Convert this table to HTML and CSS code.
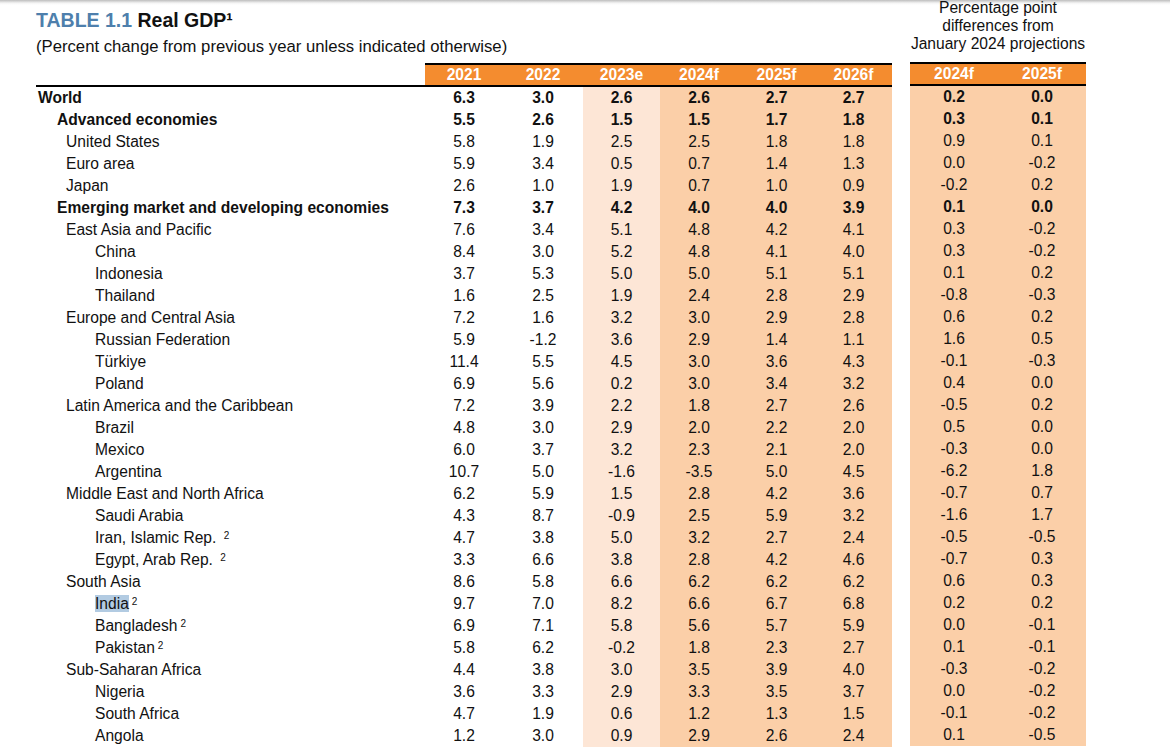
FILE: index.html
```html
<!DOCTYPE html>
<html lang="en">
<head>
<meta charset="utf-8">
<title>Table 1.1 Real GDP</title>
<link rel="stylesheet" href="styles.css">
</head>
<body>
<div class="page">
  <section class="main">
    <div class="title-block">
      <h1 class="title"><span class="num">TABLE 1.1</span> Real GDP¹</h1>
      <p class="subtitle">(Percent change from previous year unless indicated otherwise)</p>
    </div>
    <div class="hrow">
      <div class="lab"></div>
      <div class="y">2021</div><div class="y">2022</div><div class="y">2023e</div><div class="y">2024f</div><div class="y">2025f</div><div class="y">2026f</div>
    </div>
    <div class="row b"><div class="lab l0">World</div><div>6.3</div><div>3.0</div><div class="e">2.6</div><div class="f">2.6</div><div class="f">2.7</div><div class="f">2.7</div></div>
    <div class="row b"><div class="lab l1">Advanced economies</div><div>5.5</div><div>2.6</div><div class="e">1.5</div><div class="f">1.5</div><div class="f">1.7</div><div class="f">1.8</div></div>
    <div class="row"><div class="lab l2">United States</div><div>5.8</div><div>1.9</div><div class="e">2.5</div><div class="f">2.5</div><div class="f">1.8</div><div class="f">1.8</div></div>
    <div class="row"><div class="lab l2">Euro area</div><div>5.9</div><div>3.4</div><div class="e">0.5</div><div class="f">0.7</div><div class="f">1.4</div><div class="f">1.3</div></div>
    <div class="row"><div class="lab l2">Japan</div><div>2.6</div><div>1.0</div><div class="e">1.9</div><div class="f">0.7</div><div class="f">1.0</div><div class="f">0.9</div></div>
    <div class="row b"><div class="lab l1">Emerging market and developing economies</div><div>7.3</div><div>3.7</div><div class="e">4.2</div><div class="f">4.0</div><div class="f">4.0</div><div class="f">3.9</div></div>
    <div class="row"><div class="lab l2">East Asia and Pacific</div><div>7.6</div><div>3.4</div><div class="e">5.1</div><div class="f">4.8</div><div class="f">4.2</div><div class="f">4.1</div></div>
    <div class="row"><div class="lab l3">China</div><div>8.4</div><div>3.0</div><div class="e">5.2</div><div class="f">4.8</div><div class="f">4.1</div><div class="f">4.0</div></div>
    <div class="row"><div class="lab l3">Indonesia</div><div>3.7</div><div>5.3</div><div class="e">5.0</div><div class="f">5.0</div><div class="f">5.1</div><div class="f">5.1</div></div>
    <div class="row"><div class="lab l3">Thailand</div><div>1.6</div><div>2.5</div><div class="e">1.9</div><div class="f">2.4</div><div class="f">2.8</div><div class="f">2.9</div></div>
    <div class="row"><div class="lab l2">Europe and Central Asia</div><div>7.2</div><div>1.6</div><div class="e">3.2</div><div class="f">3.0</div><div class="f">2.9</div><div class="f">2.8</div></div>
    <div class="row"><div class="lab l3">Russian Federation</div><div>5.9</div><div>-1.2</div><div class="e">3.6</div><div class="f">2.9</div><div class="f">1.4</div><div class="f">1.1</div></div>
    <div class="row"><div class="lab l3">Türkiye</div><div>11.4</div><div>5.5</div><div class="e">4.5</div><div class="f">3.0</div><div class="f">3.6</div><div class="f">4.3</div></div>
    <div class="row"><div class="lab l3">Poland</div><div>6.9</div><div>5.6</div><div class="e">0.2</div><div class="f">3.0</div><div class="f">3.4</div><div class="f">3.2</div></div>
    <div class="row"><div class="lab l2">Latin America and the Caribbean</div><div>7.2</div><div>3.9</div><div class="e">2.2</div><div class="f">1.8</div><div class="f">2.7</div><div class="f">2.6</div></div>
    <div class="row"><div class="lab l3">Brazil</div><div>4.8</div><div>3.0</div><div class="e">2.9</div><div class="f">2.0</div><div class="f">2.2</div><div class="f">2.0</div></div>
    <div class="row"><div class="lab l3">Mexico</div><div>6.0</div><div>3.7</div><div class="e">3.2</div><div class="f">2.3</div><div class="f">2.1</div><div class="f">2.0</div></div>
    <div class="row"><div class="lab l3">Argentina</div><div>10.7</div><div>5.0</div><div class="e">-1.6</div><div class="f">-3.5</div><div class="f">5.0</div><div class="f">4.5</div></div>
    <div class="row"><div class="lab l2">Middle East and North Africa</div><div>6.2</div><div>5.9</div><div class="e">1.5</div><div class="f">2.8</div><div class="f">4.2</div><div class="f">3.6</div></div>
    <div class="row"><div class="lab l3">Saudi Arabia</div><div>4.3</div><div>8.7</div><div class="e">-0.9</div><div class="f">2.5</div><div class="f">5.9</div><div class="f">3.2</div></div>
    <div class="row"><div class="lab l3">Iran, Islamic Rep. <sup class="fn">2</sup></div><div>4.7</div><div>3.8</div><div class="e">5.0</div><div class="f">3.2</div><div class="f">2.7</div><div class="f">2.4</div></div>
    <div class="row"><div class="lab l3">Egypt, Arab Rep. <sup class="fn">2</sup></div><div>3.3</div><div>6.6</div><div class="e">3.8</div><div class="f">2.8</div><div class="f">4.2</div><div class="f">4.6</div></div>
    <div class="row"><div class="lab l2">South Asia</div><div>8.6</div><div>5.8</div><div class="e">6.6</div><div class="f">6.2</div><div class="f">6.2</div><div class="f">6.2</div></div>
    <div class="row"><div class="lab l3"><span class="sel">India</span><sup class="fn">2</sup></div><div>9.7</div><div>7.0</div><div class="e">8.2</div><div class="f">6.6</div><div class="f">6.7</div><div class="f">6.8</div></div>
    <div class="row"><div class="lab l3">Bangladesh<sup class="fn">2</sup></div><div>6.9</div><div>7.1</div><div class="e">5.8</div><div class="f">5.6</div><div class="f">5.7</div><div class="f">5.9</div></div>
    <div class="row"><div class="lab l3">Pakistan<sup class="fn">2</sup></div><div>5.8</div><div>6.2</div><div class="e">-0.2</div><div class="f">1.8</div><div class="f">2.3</div><div class="f">2.7</div></div>
    <div class="row"><div class="lab l2">Sub-Saharan Africa</div><div>4.4</div><div>3.8</div><div class="e">3.0</div><div class="f">3.5</div><div class="f">3.9</div><div class="f">4.0</div></div>
    <div class="row"><div class="lab l3">Nigeria</div><div>3.6</div><div>3.3</div><div class="e">2.9</div><div class="f">3.3</div><div class="f">3.5</div><div class="f">3.7</div></div>
    <div class="row"><div class="lab l3">South Africa</div><div>4.7</div><div>1.9</div><div class="e">0.6</div><div class="f">1.2</div><div class="f">1.3</div><div class="f">1.5</div></div>
    <div class="row"><div class="lab l3">Angola</div><div>1.2</div><div>3.0</div><div class="e">0.9</div><div class="f">2.9</div><div class="f">2.6</div><div class="f">2.4</div></div>
  </section>

  <section class="diff">
    <div class="note">Percentage point<br>differences from<br>January 2024 projections</div>
    <div class="hrow"><div class="y">2024f</div><div class="y">2025f</div></div>
    <div class="row b"><div>0.2</div><div>0.0</div></div>
    <div class="row b"><div>0.3</div><div>0.1</div></div>
    <div class="row"><div>0.9</div><div>0.1</div></div>
    <div class="row"><div>0.0</div><div>-0.2</div></div>
    <div class="row"><div>-0.2</div><div>0.2</div></div>
    <div class="row b"><div>0.1</div><div>0.0</div></div>
    <div class="row"><div>0.3</div><div>-0.2</div></div>
    <div class="row"><div>0.3</div><div>-0.2</div></div>
    <div class="row"><div>0.1</div><div>0.2</div></div>
    <div class="row"><div>-0.8</div><div>-0.3</div></div>
    <div class="row"><div>0.6</div><div>0.2</div></div>
    <div class="row"><div>1.6</div><div>0.5</div></div>
    <div class="row"><div>-0.1</div><div>-0.3</div></div>
    <div class="row"><div>0.4</div><div>0.0</div></div>
    <div class="row"><div>-0.5</div><div>0.2</div></div>
    <div class="row"><div>0.5</div><div>0.0</div></div>
    <div class="row"><div>-0.3</div><div>0.0</div></div>
    <div class="row"><div>-6.2</div><div>1.8</div></div>
    <div class="row"><div>-0.7</div><div>0.7</div></div>
    <div class="row"><div>-1.6</div><div>1.7</div></div>
    <div class="row"><div>-0.5</div><div>-0.5</div></div>
    <div class="row"><div>-0.7</div><div>0.3</div></div>
    <div class="row"><div>0.6</div><div>0.3</div></div>
    <div class="row"><div>0.2</div><div>0.2</div></div>
    <div class="row"><div>0.0</div><div>-0.1</div></div>
    <div class="row"><div>0.1</div><div>-0.1</div></div>
    <div class="row"><div>-0.3</div><div>-0.2</div></div>
    <div class="row"><div>0.0</div><div>-0.2</div></div>
    <div class="row"><div>-0.1</div><div>-0.2</div></div>
    <div class="row"><div>0.1</div><div>-0.5</div></div>
  </section>
</div>
</body>
</html>
```
FILE: styles.css
```css
html, body {
  margin: 0;
  padding: 0;
}
body {
  font-family: "Liberation Sans", Arial, sans-serif;
  color: #111;
  background: #fff linear-gradient(#bdbdbd, #f4f4f4 3px, #fff 5px) no-repeat;
  width: 1170px;
  height: 750px;
  overflow: hidden;
}
.page {
  display: flex;
  gap: 18px;
  padding-left: 36px;
}
.main {
  width: 856px;
}
.diff {
  width: 176px;
}
.title-block {
  height: 63px;
}
.title {
  margin: 0;
  padding-top: 9px;
  font-size: 19.5px;
  line-height: 22px;
  font-weight: bold;
  color: #111;
}
.title .num {
  color: #4e7fac;
}
.subtitle {
  margin: 7px 0 0;
  font-size: 16.7px;
  line-height: 18px;
}
.note {
  height: 63px;
  margin-top: -1px;
  text-align: center;
  font-size: 15.6px;
  line-height: 18px;
}
.hrow, .row {
  display: grid;
  font-size: 15.6px;
}
.main .hrow, .main .row {
  grid-template-columns: 389px 78px 80px 77px 78px 77px 77px;
}
.diff .hrow, .diff .row {
  grid-template-columns: 88px 88px;
}
.hrow {
  border-bottom: 2px solid #000;
  font-weight: bold;
}
.hrow .y {
  background: #f48c2f;
  color: #fff;
  border-top: 2px solid #000;
  line-height: 20px;
  text-align: center;
}
.row {
  height: 22px;
  line-height: 22px;
  text-align: center;
}
.row.b {
  font-weight: bold;
}
.row .lab {
  text-align: left;
  white-space: nowrap;
}
.l0 { padding-left: 2px; }
.l1 { padding-left: 21px; }
.l2 { padding-left: 30px; }
.l3 { padding-left: 59px; }
.e {
  background: #fde6d6;
}
.f, .diff .row div {
  background: #fbcfa8;
}
.fn {
  font-size: 10px;
  line-height: 0;
  vertical-align: 4px;
  margin-left: 3px;
}
.sel {
  background: #b2cbe2;
}
```
